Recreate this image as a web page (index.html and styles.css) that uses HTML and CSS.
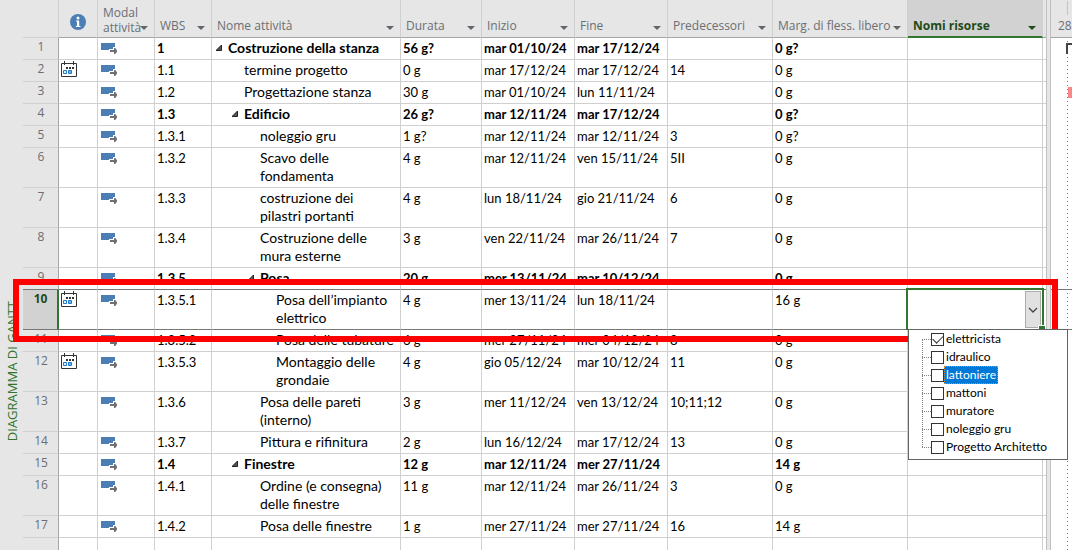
FILE: index.html
```
<!DOCTYPE html>
<html lang="it">
<head>
<meta charset="utf-8">
<title>Diagramma di Gantt</title>
<link rel="stylesheet" href="styles.css">
</head>
<body>
<svg class="defs" aria-hidden="true">
  <symbol id="auto" viewBox="0 0 16 12">
    <path d="M0 0h14v4h-2v2H8v1H0z" fill="#4a7eb4"/>
    <path d="M8 6h4V4h2l2 2v4H8z" fill="#fff"/>
    <path d="M9 7h4V5h1.200L16.500 8l-2.300 3H13V9H9z" fill="#707070"/>
  </symbol>
  <symbol id="cal" viewBox="0 0 16 16">
    <path d="M.5 2.500h15v13H.5zM3.500 0v4M12.500 0v4" fill="#fff" stroke="#333"/>
    <path d="M5 6h2v2H5zM8 6h2v2H8zM11 6h2v2h-2z" fill="#333"/>
    <path d="M2.500 9.500h3v3h-3zM7.500 9.500h3v3h-3z" fill="#e8f3fc" stroke="#1979ca"/>
    <path d="M8 10h2v2H8z" fill="#6fb2ea"/>
  </symbol>
  <symbol id="tri" viewBox="0 0 6 6">
    <path d="M5.500 0v5.500H0z" fill="#555" stroke="#222" stroke-width="1"/>
  </symbol>
</svg>
<main class="app">
  <aside class="side"><span class="side-title">DIAGRAMMA DI GANTT</span></aside>
  <section class="sheet">
    <table>
      <colgroup><col class="c-num"><col class="c-info"><col class="c-mode"><col class="c-mode"><col class="c-name"><col class="c-dur"><col class="c-date"><col class="c-date"><col class="c-pred"><col class="c-wide"><col class="c-wide"><col class="c-end"></colgroup>
      <thead>
        <tr>
          <th class="corner"></th>
          <th class="info"><svg class="info-icon" viewBox="0 0 16 16"><circle cx="8" cy="8" r="8" fill="#4a7eb4"/><circle cx="8" cy="4" r="1.500" fill="#fff"/><path d="M6 6.500h3.200V12H10.500v1H5.800v-1H7V7.500H6z" fill="#fff"/></svg></th>
          <th><div class="head"><span class="two">Modal<br>attività</span><i class="arrow"></i></div></th>
          <th><div class="head"><span>WBS</span><i class="arrow"></i></div></th>
          <th><div class="head"><span>Nome attività</span><i class="arrow"></i></div></th>
          <th><div class="head"><span>Durata</span><i class="arrow"></i></div></th>
          <th><div class="head"><span>Inizio</span><i class="arrow"></i></div></th>
          <th><div class="head"><span>Fine</span><i class="arrow"></i></div></th>
          <th><div class="head"><span>Predecessori</span><i class="arrow"></i></div></th>
          <th><div class="head"><span>Marg. di fless. libero</span><i class="arrow"></i></div></th>
          <th class="active"><div class="head"><span>Nomi risorse</span><i class="arrow"></i></div></th>
          <th></th>
        </tr>
      </thead>
      <tbody>
        <tr class="sum"><th>1</th><td></td><td class="mode"><svg><use href="#auto"/></svg></td><td>1</td><td><div class="name l1"><button aria-label="Comprimi"><svg><use href="#tri"/></svg></button>Costruzione della stanza</div></td><td>56 g?</td><td>mar 01/10/24</td><td>mar 17/12/24</td><td></td><td>0 g?</td><td></td><td></td></tr>
        <tr><th>2</th><td class="ind"><svg><use href="#cal"/></svg></td><td class="mode"><svg><use href="#auto"/></svg></td><td>1.1</td><td><div class="name l2">termine progetto</div></td><td>0 g</td><td>mar 17/12/24</td><td>mar 17/12/24</td><td>14</td><td>0 g</td><td></td><td></td></tr>
        <tr><th>3</th><td></td><td class="mode"><svg><use href="#auto"/></svg></td><td>1.2</td><td><div class="name l2">Progettazione stanza</div></td><td>30 g</td><td>mar 01/10/24</td><td>lun 11/11/24</td><td></td><td>0 g</td><td></td><td></td></tr>
        <tr class="sum"><th>4</th><td></td><td class="mode"><svg><use href="#auto"/></svg></td><td>1.3</td><td><div class="name l2"><button aria-label="Comprimi"><svg><use href="#tri"/></svg></button>Edificio</div></td><td>26 g?</td><td>mar 12/11/24</td><td>mar 17/12/24</td><td></td><td>0 g?</td><td></td><td></td></tr>
        <tr><th>5</th><td></td><td class="mode"><svg><use href="#auto"/></svg></td><td>1.3.1</td><td><div class="name l3">noleggio gru</div></td><td>1 g?</td><td>mar 12/11/24</td><td>mar 12/11/24</td><td>3</td><td>0 g?</td><td></td><td></td></tr>
        <tr><th>6</th><td></td><td class="mode"><svg><use href="#auto"/></svg></td><td>1.3.2</td><td><div class="name l3">Scavo delle<br>fondamenta</div></td><td>4 g</td><td>mar 12/11/24</td><td>ven 15/11/24</td><td>5II</td><td>0 g</td><td></td><td></td></tr>
        <tr><th>7</th><td></td><td class="mode"><svg><use href="#auto"/></svg></td><td>1.3.3</td><td><div class="name l3">costruzione dei<br>pilastri portanti</div></td><td>4 g</td><td>lun 18/11/24</td><td>gio 21/11/24</td><td>6</td><td>0 g</td><td></td><td></td></tr>
        <tr><th>8</th><td></td><td class="mode"><svg><use href="#auto"/></svg></td><td>1.3.4</td><td><div class="name l3">Costruzione delle<br>mura esterne</div></td><td>3 g</td><td>ven 22/11/24</td><td>mar 26/11/24</td><td>7</td><td>0 g</td><td></td><td></td></tr>
        <tr class="sum above"><th>9</th><td></td><td class="mode"><svg><use href="#auto"/></svg></td><td>1.3.5</td><td><div class="name l3"><button aria-label="Comprimi"><svg><use href="#tri"/></svg></button>Posa</div></td><td>20 g</td><td>mer 13/11/24</td><td>mar 10/12/24</td><td></td><td>0 g</td><td></td><td></td></tr>
        <tr class="current"><th>10</th><td class="ind"><svg><use href="#cal"/></svg></td><td class="mode"><svg><use href="#auto"/></svg></td><td>1.3.5.1</td><td><div class="name l4">Posa dell’impianto<br>elettrico</div></td><td>4 g</td><td>mer 13/11/24</td><td>lun 18/11/24</td><td></td><td>16 g</td>
          <td class="edit">
            <div class="cell-box"><button class="drop" aria-label="Apri elenco risorse"><svg viewBox="0 0 10 6"><path d="M1 1l4 4 4-4" fill="none" stroke="#444" stroke-width="1.300"/></svg></button></div>
            <ul class="list">
              <li><label><input type="checkbox" checked><span>elettricista</span></label></li>
              <li><label><input type="checkbox"><span>idraulico</span></label></li>
              <li><label><input type="checkbox"><span class="focus">lattoniere</span></label></li>
              <li><label><input type="checkbox"><span>mattoni</span></label></li>
              <li><label><input type="checkbox"><span>muratore</span></label></li>
              <li><label><input type="checkbox"><span>noleggio gru</span></label></li>
              <li><label><input type="checkbox"><span>Progetto Architetto</span></label></li>
            </ul>
          </td><td class="last"><div class="frame"></div></td></tr>
        <tr><th>11</th><td></td><td class="mode"><svg><use href="#auto"/></svg></td><td>1.3.5.2</td><td><div class="name l4">Posa delle tubature</div></td><td>6 g</td><td>mer 27/11/24</td><td>mer 04/12/24</td><td>8</td><td>0 g</td><td></td><td></td></tr>
        <tr><th>12</th><td class="ind"><svg><use href="#cal"/></svg></td><td class="mode"><svg><use href="#auto"/></svg></td><td>1.3.5.3</td><td><div class="name l4">Montaggio delle<br>grondaie</div></td><td>4 g</td><td>gio 05/12/24</td><td>mar 10/12/24</td><td>11</td><td>0 g</td><td></td><td></td></tr>
        <tr><th>13</th><td></td><td class="mode"><svg><use href="#auto"/></svg></td><td>1.3.6</td><td><div class="name l3">Posa delle pareti<br>(interno)</div></td><td>3 g</td><td>mer 11/12/24</td><td>ven 13/12/24</td><td>10;11;12</td><td>0 g</td><td></td><td></td></tr>
        <tr><th>14</th><td></td><td class="mode"><svg><use href="#auto"/></svg></td><td>1.3.7</td><td><div class="name l3">Pittura e rifinitura</div></td><td>2 g</td><td>lun 16/12/24</td><td>mar 17/12/24</td><td>13</td><td>0 g</td><td></td><td></td></tr>
        <tr class="sum"><th>15</th><td></td><td class="mode"><svg><use href="#auto"/></svg></td><td>1.4</td><td><div class="name l2"><button aria-label="Comprimi"><svg><use href="#tri"/></svg></button>Finestre</div></td><td>12 g</td><td>mar 12/11/24</td><td>mer 27/11/24</td><td></td><td>14 g</td><td></td><td></td></tr>
        <tr><th>16</th><td></td><td class="mode"><svg><use href="#auto"/></svg></td><td>1.4.1</td><td><div class="name l3">Ordine (e consegna)<br>delle finestre</div></td><td>11 g</td><td>mar 12/11/24</td><td>mar 26/11/24</td><td>3</td><td>0 g</td><td></td><td></td></tr>
        <tr><th>17</th><td></td><td class="mode"><svg><use href="#auto"/></svg></td><td>1.4.2</td><td><div class="name l3">Posa delle finestre</div></td><td>1 g</td><td>mer 27/11/24</td><td>mer 27/11/24</td><td>16</td><td>14 g</td><td></td><td></td></tr>
        <tr><th></th><td></td><td></td><td></td><td></td><td></td><td></td><td></td><td></td><td></td><td></td><td></td></tr>
      </tbody>
    </table>
  </section>
  <div class="splitter"></div>
  <section class="gantt">
    <header class="scale"><span>28</span><i class="tick"></i></header>
    <div class="chart">
      <i class="bracket"></i><i class="bar"></i><i class="row-line"></i><i class="row-line low"></i>
    </div>
  </section>
</main>
</body>
</html>
```
FILE: styles.css
```
* { box-sizing: border-box; }
body {
  margin: 0;
  overflow: hidden;
  background: #fff;
  color: #000;
  font: 13px/18px Lato, Carlito, sans-serif;
}
.defs { position: absolute; width: 0; height: 0; }
.app { display: flex; height: 100vh; overflow: hidden; }
.side {
  flex: none;
  width: 23px;
  display: flex;
  align-items: center;
  justify-content: center;
  padding-top: 192px;
  background: #e6e6e6;
}
.side-title {
  writing-mode: vertical-rl;
  transform: rotate(180deg);
  white-space: nowrap;
  color: #31752f;
  font: 500 13px/18px "Open Sans", sans-serif;
}
.sheet { flex: none; }
table { table-layout: fixed; width: 1023px; border-spacing: 0; }
.c-num { width: 36px; }
.c-info { width: 39px; }
.c-mode { width: 57px; }
.c-name { width: 189px; }
.c-dur { width: 81px; }
.c-date { width: 93px; }
.c-pred { width: 105px; }
.c-wide { width: 135px; }
.c-end { width: 3px; }
th {
  background: #e6e6e6;
  color: #6a6e75;
  font: 12px/15px "Open Sans", sans-serif;
}
thead th {
  height: 38px;
  padding: 0 0 2px;
  vertical-align: bottom;
  border-right: 1px solid #d0d0d0;
  border-bottom: 1px solid #a6a6a6;
  white-space: nowrap;
  text-align: left;
}
thead th.corner { border-bottom-color: #d0d0d0; }
thead th.info { vertical-align: middle; text-align: center; padding: 7px 0 0; }
thead th:last-child { border-right: 0; }
.info-icon { display: block; width: 16px; height: 16px; margin: 0 auto; }
.head { display: flex; align-items: flex-end; padding: 0 6px 0 5px; }
.head span { flex: 1; min-width: 0; padding-bottom: 2px; }
.head .two { padding-bottom: 0; }
.arrow {
  flex: none;
  margin-bottom: 5px;
  border: 4px solid transparent;
  border-top-color: #60646b;
  border-bottom: 0;
}
thead th.active {
  background: #d2d2d2;
  color: #1f4a17;
  font-weight: 700;
  padding-bottom: 1px;
  border-bottom: 2px solid #31752f;
}
.active .arrow { border-top-color: #1f4a17; }
tbody th {
  padding: 0 0 3px 1px;
  line-height: 18px;
  font-weight: 400;
  vertical-align: top;
  text-align: center;
  border-right: 1px solid #a6a6a6;
  border-bottom: 1px solid #d0d0d0;
}
td {
  height: 22px;
  padding: 1px 0 2px 2px;
  vertical-align: top;
  white-space: nowrap;
  border-right: 1px solid #d0d0d0;
  border-bottom: 1px solid #d0d0d0;
}
td:last-child { border-right: 0; padding: 0; }
td svg { display: block; }
.mode { padding-left: 3px; }
.mode svg { width: 16px; height: 12px; margin-top: 4px; }
.ind { padding: 1px 0 0 2px; }
.ind svg { width: 16px; height: 16px; }
.sum td { font-weight: 700; }
.name { font-size: 14px; display: flow-root; }
.l1 { padding-left: 14px; }
.l2 { padding-left: 30px; }
.l3 { padding-left: 46px; }
.l4 { padding-left: 62px; }
.name button {
  float: left;
  width: 12px;
  margin: 6px 0 0 -12px;
  padding: 0;
  border: 0;
  background: none;
}
.name button svg { width: 6px; height: 6px; }
.above th, .above td, .current th, .current td { border-bottom-color: #777; }
.current { position: relative; }
.current th {
  background: #d2d2d2;
  color: #1f4a17;
  font-weight: 700;
  border-right: 2px solid #31752f;
}
.frame {
  position: absolute;
  z-index: 2;
  inset: -11px -12px -12px -10px;
  border: 6px solid #f00;
  pointer-events: none;
}
.edit { position: relative; padding: 0; }
.cell-box {
  position: absolute;
  z-index: 3;
  inset: -2px -2px -1px -2px;
  display: flex;
  justify-content: flex-end;
  padding: 1px 1px 2px 0;
  border: 2px solid #31752f;
  border-bottom: 0;
}
.cell-box::after {
  content: "";
  position: absolute;
  right: -3px;
  bottom: 0;
  width: 6px;
  height: 4px;
  background: #31752f;
  border: solid #fff;
  border-width: 1px 0 0 1px;
}
.drop {
  width: 16px;
  display: flex;
  align-items: center;
  justify-content: center;
  padding: 0;
  border: 1px solid #adadad;
  background: #e1e1e1;
}
.drop svg { width: 10px; height: 6px; }
.list {
  position: absolute;
  z-index: 4;
  top: 39px;
  left: 0;
  width: 160px;
  margin: 0;
  padding: 0 0 3px 13px;
  list-style: none;
  background: #fff;
  border: 1px solid #646464;
  font-size: 12px;
}
.list::before {
  content: "";
  position: absolute;
  top: 10px;
  bottom: 12px;
  left: 13px;
  border-left: 1px dotted #808080;
}
.list label { display: flex; align-items: center; height: 18px; }
.list label::before { content: ""; width: 9px; border-top: 1px dotted #808080; }
.list input {
  appearance: none;
  flex: none;
  width: 13px;
  height: 13px;
  margin: 0;
  border: 1px solid #333;
  background: #fff;
}
.list input:checked::before {
  content: "";
  display: block;
  width: 9px;
  height: 5px;
  margin: 1px;
  border: solid #333;
  border-width: 0 0 1px 1px;
  transform: rotate(-45deg);
}
.list span { padding: 0 2px; line-height: 18px; }
.list .focus { background: #0078d7; color: #fff; outline: 1px dotted #e08830; outline-offset: -1px; }
.splitter {
  flex: none;
  width: 5px;
  background: #e6e6e6;
  border: solid #c0c0c0;
  border-width: 0 1px;
}
.gantt { flex: 1; min-width: 0; display: flex; flex-direction: column; }
.scale {
  position: relative;
  height: 38px;
  padding: 17px 0 0 7px;
  background: #e6e6e6;
  border-bottom: 1px solid #a6a6a6;
  color: #6a6e75;
  font: 12px/18px "Open Sans", sans-serif;
}
.tick { position: absolute; top: 1px; left: 16px; height: 14px; border-left: 1px solid #c4c4c4; }
.chart { position: relative; flex: 1; }
.chart::before {
  content: "";
  position: absolute;
  top: 3px;
  bottom: 0;
  left: 16px;
  width: 1px;
  background: repeating-linear-gradient(#777 0 1px, transparent 1px 4px);
}
.bracket {
  position: absolute;
  top: 5px;
  left: 15px;
  right: 0;
  height: 11px;
  border-top: 2px solid #444;
  border-left: 2px solid #444;
}
.bar { position: absolute; top: 49px; left: 17px; right: 0; height: 11px; background: #f88888; }
.row-line { position: absolute; top: 251px; left: 0; right: 0; border-top: 1px solid #777; }
.row-line.low { top: 291px; }
```
